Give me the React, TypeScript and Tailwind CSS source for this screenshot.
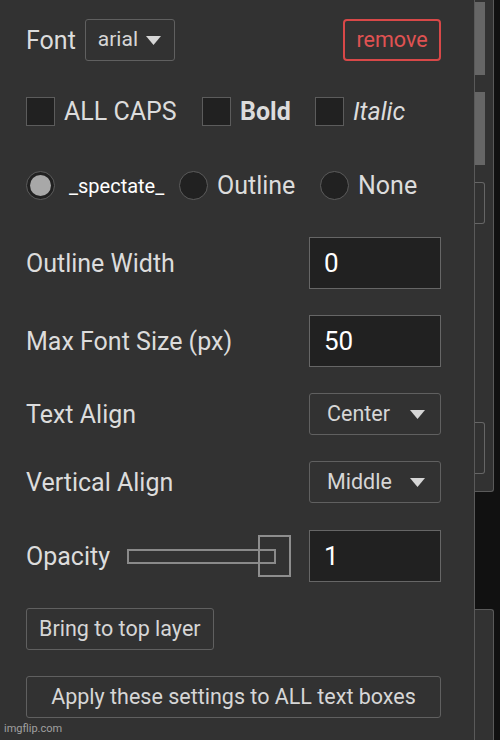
import React from "react";

const font = "font-['Roboto','Liberation_Sans',sans-serif]";

function Caret() {
  return (
    <svg width="15" height="9" viewBox="0 0 15 9" className="shrink-0">
      <path d="M0 0h15L7.5 9z" fill="#d6d6d6" />
    </svg>
  );
}

function Checkbox({ label, className }: { label: string; className?: string }) {
  return (
    <div className="flex items-center">
      <div className="w-[29px] h-[29px] bg-[#212121] border border-[#5c5c5c]" />
      <span className={`ml-[9px] text-[25px] leading-none text-[#dcdcdc] ${className ?? ""}`}>{label}</span>
    </div>
  );
}

function Radio({ checked }: { checked?: boolean }) {
  return (
    <div className="w-[29px] h-[29px] shrink-0 rounded-full bg-[#212121] border border-[#5c5c5c] flex items-center justify-center">
      {checked && <div className="w-[21px] h-[21px] rounded-full bg-[#a8a8a8]" />}
    </div>
  );
}

function Row({ label, children, className }: { label: string; children: React.ReactNode; className?: string }) {
  return (
    <div className={`flex items-center justify-between w-[415px] ${className ?? ""}`}>
      <span className="text-[25px] leading-none text-[#dcdcdc]">{label}</span>
      {children}
    </div>
  );
}

function NumberInput({ value }: { value: string }) {
  return (
    <div className="w-[132px] h-[52px] bg-[#212121] border border-[#666] flex items-center pl-[14px] text-[26px] text-white">
      {value}
    </div>
  );
}

function Select({ value }: { value: string }) {
  return (
    <div className="w-[132px] h-[42px] border border-[#606060] rounded-[3px] flex items-center justify-between pl-[17px] pr-[15px] text-[21.5px] text-[#d6d6d6]">
      <span>{value}</span>
      <Caret />
    </div>
  );
}

export default function App() {
  return (
    <div className={`w-[500px] h-[740px] bg-[#111] flex overflow-hidden ${font}`}>
      {/* Main settings panel */}
      <div className="w-[475px] h-full bg-[#323232] border-r border-[#5a5a5a] pl-[26px] pt-[19px] relative">
        <div className="flex items-center justify-between w-[415px] h-[42px]">
          <div className="flex items-center">
            <span className="text-[25px] leading-none text-[#dcdcdc]">Font</span>
            <div className="ml-[9px] w-[90px] h-[42px] border border-[#606060] rounded-[3px] flex items-center pl-[12px] gap-[8px] text-[21px] text-[#d6d6d6]">
              <span>arial</span>
              <Caret />
            </div>
          </div>
          <button className="w-[98px] h-[42px] border-2 border-[#d84848] rounded-[4px] text-[21.5px] text-[#e05252] flex items-center justify-center">
            remove
          </button>
        </div>

        <div className="flex items-center mt-[36px] h-[29px]">
          <div className="w-[176px]">
            <Checkbox label="ALL CAPS" />
          </div>
          <div className="w-[113px]">
            <Checkbox label="Bold" className="font-bold" />
          </div>
          <Checkbox label="Italic" className="italic" />
        </div>

        <div className="flex items-center mt-[45px] h-[29px]">
          <div className="w-[153px] flex items-center">
            <Radio checked />
            <span className="ml-[14px] text-[20px] leading-none text-white">_spectate_</span>
          </div>
          <div className="w-[141px] flex items-center">
            <Radio />
            <span className="ml-[9px] text-[25px] leading-none text-[#dcdcdc]">Outline</span>
          </div>
          <div className="flex items-center">
            <Radio />
            <span className="ml-[9px] text-[25px] leading-none text-[#dcdcdc]">None</span>
          </div>
        </div>

        <Row label="Outline Width" className="mt-[37px]">
          <NumberInput value="0" />
        </Row>
        <Row label="Max Font Size (px)" className="mt-[26px]">
          <NumberInput value="50" />
        </Row>
        <Row label="Text Align" className="mt-[26px]">
          <Select value="Center" />
        </Row>
        <Row label="Vertical Align" className="mt-[26px]">
          <Select value="Middle" />
        </Row>

        <div className="flex items-center w-[415px] mt-[27px]">
          <span className="w-[101px] text-[25px] leading-none text-[#dcdcdc]">Opacity</span>
          <div className="relative w-[165px] h-[42px] flex items-center">
            <div className="w-[149px] h-[15px] border-2 border-[#8a8a8a]" />
            <div className="absolute left-[131px] top-0 w-[33px] h-[42px] border-2 border-[#8e8e8e]" />
          </div>
          <div className="ml-auto">
            <NumberInput value="1" />
          </div>
        </div>

        <button className="mt-[26px] h-[42px] px-[12px] border border-[#606060] rounded-[3px] text-[21.5px] text-[#d6d6d6] flex items-center">
          Bring to top layer
        </button>
        <button className="mt-[26px] w-[415px] h-[42px] border border-[#606060] rounded-[3px] text-[21.5px] text-[#d6d6d6] flex items-center justify-center">
          Apply these settings to ALL text boxes
        </button>

        <span className="absolute left-[4px] bottom-[3px] text-[11px] text-[#a0a0a0]">imgflip.com</span>
      </div>

      {/* Panel peeking behind on the right */}
      <div className="w-[19px] h-full flex flex-col">
        <div className="h-[492px] bg-[#323232] border-r border-b border-[#5a5a5a] rounded-br-[3px] pt-[2px] flex flex-col">
          <div className="w-[10px] h-[73px] bg-[#666]" />
          <div className="w-[10px] h-[73px] bg-[#666] mt-[17px]" />
          <div className="w-[10px] h-[42px] border border-l-0 border-[#666] rounded-r-[3px] mt-[17px]" />
          <div className="w-[10px] h-[52px] border border-l-0 border-[#666] rounded-r-[3px] mt-[198px]" />
        </div>
        <div className="flex-1" />
        <div className="h-[131px] bg-[#323232] border-r border-t border-[#5a5a5a] rounded-tr-[3px]" />
      </div>
    </div>
  );
}
